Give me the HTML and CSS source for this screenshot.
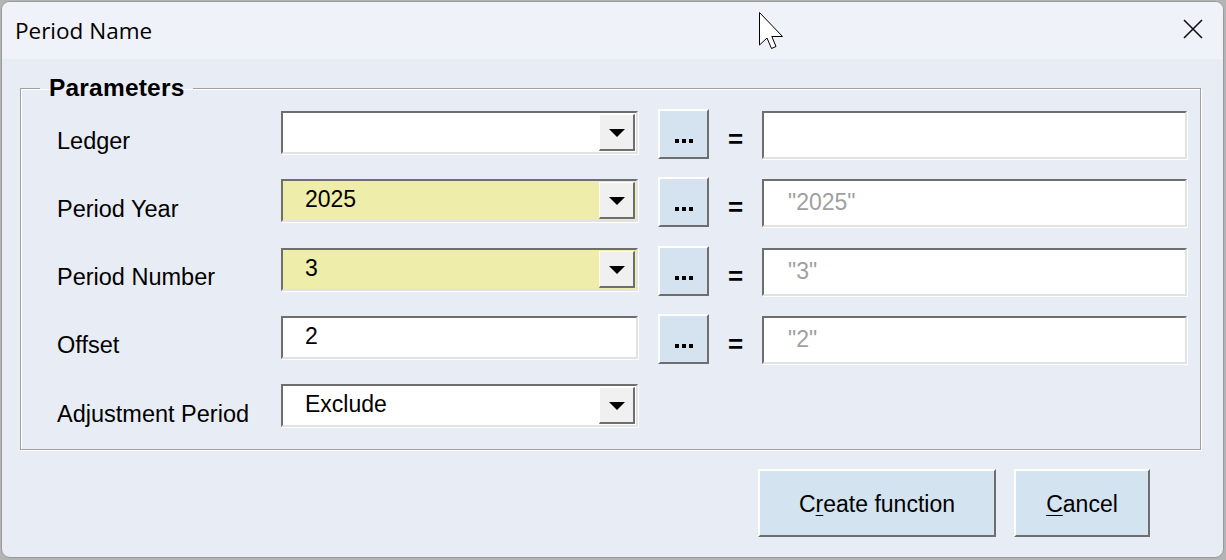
FILE: index.html
```html
<!DOCTYPE html>
<html lang="en">
<head>
  <meta charset="UTF-8">
  <title>Period Name</title>
  <link rel="stylesheet" href="styles.css">
</head>
<body>
<div class="window">
  <div class="titlebar">
    <span class="title">Period Name</span>
    <svg class="close" width="20" height="20" viewBox="0 0 20 20">
      <path d="M1 1 L19 19 M19 1 L1 19" stroke="#111" stroke-width="1.6" fill="none"/>
    </svg>
  </div>

  <div class="content">
    <fieldset class="frame">
      <legend>Parameters</legend>
      <div class="grid">
        <div class="label">Ledger</div>
        <div class="combo"><span class="val"></span><span class="drop"><i></i></span></div>
        <div class="dots"><b></b><b></b><b></b></div>
        <div class="eq">=</div>
        <div class="result"></div>

        <div class="label">Period Year</div>
        <div class="combo req"><span class="val">2025</span><span class="drop"><i></i></span></div>
        <div class="dots"><b></b><b></b><b></b></div>
        <div class="eq">=</div>
        <div class="result">"2025"</div>

        <div class="label">Period Number</div>
        <div class="combo req"><span class="val">3</span><span class="drop"><i></i></span></div>
        <div class="dots"><b></b><b></b><b></b></div>
        <div class="eq">=</div>
        <div class="result">"3"</div>

        <div class="label">Offset</div>
        <div class="combo"><span class="val">2</span></div>
        <div class="dots"><b></b><b></b><b></b></div>
        <div class="eq">=</div>
        <div class="result">"2"</div>

        <div class="label">Adjustment Period</div>
        <div class="combo"><span class="val">Exclude</span><span class="drop"><i></i></span></div>
      </div>
    </fieldset>

    <div class="actions">
      <button class="btn wide">C<u>r</u>eate function</button>
      <button class="btn"><u>C</u>ancel</button>
    </div>
  </div>

  <svg class="cursor" width="28" height="40" viewBox="0 0 28 40">
    <path d="M0.5 0.5 L0.5 33 L8 26 L12.5 36.5 L17 34.5 L12.8 24.5 L23.5 24.5 Z" fill="#fff" stroke="#000" stroke-width="1"/>
  </svg>
</div>
</body>
</html>
```

FILE: styles.css
```css
body {
  margin: 0;
  background-color: #b4b4b4;
  font-family: "Liberation Sans", Arial, sans-serif;
  color: #000;
}
.window {
  position: relative;
  box-sizing: border-box;
  width: 1223px;
  height: 557px;
  margin: 1px 0 0 1px;
  border: 1px solid #9a9a9a;
  border-radius: 9px;
  overflow: hidden;
  background-color: #e8edf5;
  display: flex;
  flex-direction: column;
}
.titlebar {
  height: 57px;
  flex: none;
  background-color: #eff2f8;
  display: flex;
  align-items: center;
  justify-content: space-between;
  padding: 0 20px 0 13px;
}
.title {
  font-family: "Open Sans", "Noto Sans", sans-serif;
  font-size: 22.5px;
  padding-bottom: 1px;
}
.close {
  margin-top: -3px;
}
.content {
  padding: 0 22px 0 18px;
}
.frame {
  margin: 15px 0 0 0;
  padding: 9px 12px 17px 36px;
  border: 1px solid #a0a0a0;
  box-shadow: inset 1px 1px 0 #fff, 1px 1px 0 #fff;
}
.frame legend {
  margin-left: -17px;
  padding: 0 9px;
  font-size: 24.5px;
  font-weight: bold;
  line-height: 28px;
  letter-spacing: 0.2px;
}
.grid {
  display: grid;
  grid-template-columns: 224px 357px 71px 53px 425px;
  grid-template-rows: repeat(5, 48px);
  row-gap: 20.25px;
}
.label {
  font-size: 23.5px;
  align-self: center;
  padding-top: 12px;
}
.combo {
  box-sizing: border-box;
  height: 43px;
  border: 2px solid;
  border-color: #6e6e6e #e2e2e2 #e2e2e2 #6e6e6e;
  box-shadow: 1px 1px 0 #fff;
  background-color: #fff;
  display: flex;
  align-items: center;
  justify-content: space-between;
  font-size: 23px;
}
.combo.req {
  background-color: #eeeeaa;
}
.combo .val {
  padding: 0 0 2px 22px;
}
.drop {
  box-sizing: border-box;
  width: 36px;
  height: 37px;
  margin-right: 1px;
  background-color: #f0f0f0;
  border-top: 1px solid #fff;
  border-left: 1px solid #fff;
  border-right: 2px solid #6e6e6e;
  border-bottom: 2px solid #6e6e6e;
  display: flex;
  align-items: center;
  justify-content: center;
}
.drop i {
  width: 0;
  height: 0;
  border-left: 8.5px solid transparent;
  border-right: 8.5px solid transparent;
  border-top: 8px solid #000;
  margin-top: 2px;
}
.dots {
  box-sizing: border-box;
  height: 50px;
  width: 51px;
  margin: -2px 0 0 20px;
  background-color: #d5e3f0;
  border-top: 2px solid #fff;
  border-left: 2px solid #fff;
  border-right: 2px solid #6e6e6e;
  border-bottom: 2px solid #6e6e6e;
  display: flex;
  justify-content: center;
  align-items: flex-end;
  gap: 3px;
  padding-bottom: 14px;
}
.dots b {
  width: 4px;
  height: 4px;
  background-color: #000;
}
.eq {
  font-weight: bold;
  font-size: 26px;
  text-align: center;
  padding-top: 13px;
}
.result {
  box-sizing: border-box;
  height: 48px;
  border: 2px solid;
  border-color: #6e6e6e #e2e2e2 #e2e2e2 #6e6e6e;
  box-shadow: 1px 1px 0 #fff;
  background-color: #fff;
  color: #a0a0a0;
  font-size: 23px;
  padding: 8px 0 0 24px;
}
.actions {
  display: flex;
  justify-content: flex-end;
  gap: 18px;
  margin-top: 19px;
  padding-right: 51px;
}
.btn {
  box-sizing: border-box;
  height: 68px;
  width: 136px;
  background-color: #d4e3f0;
  border: 2px solid;
  border-color: #fff #6e6e6e #6e6e6e #fff;
  font-family: "Liberation Sans", Arial, sans-serif;
  font-size: 23px;
  color: #000;
  padding: 2px 0 0 0;
}
.btn.wide {
  width: 238px;
}
.btn u {
  text-decoration-thickness: 1px;
  text-underline-offset: 3px;
}
.cursor {
  position: absolute;
  left: 757px;
  top: 10px;
}
```
